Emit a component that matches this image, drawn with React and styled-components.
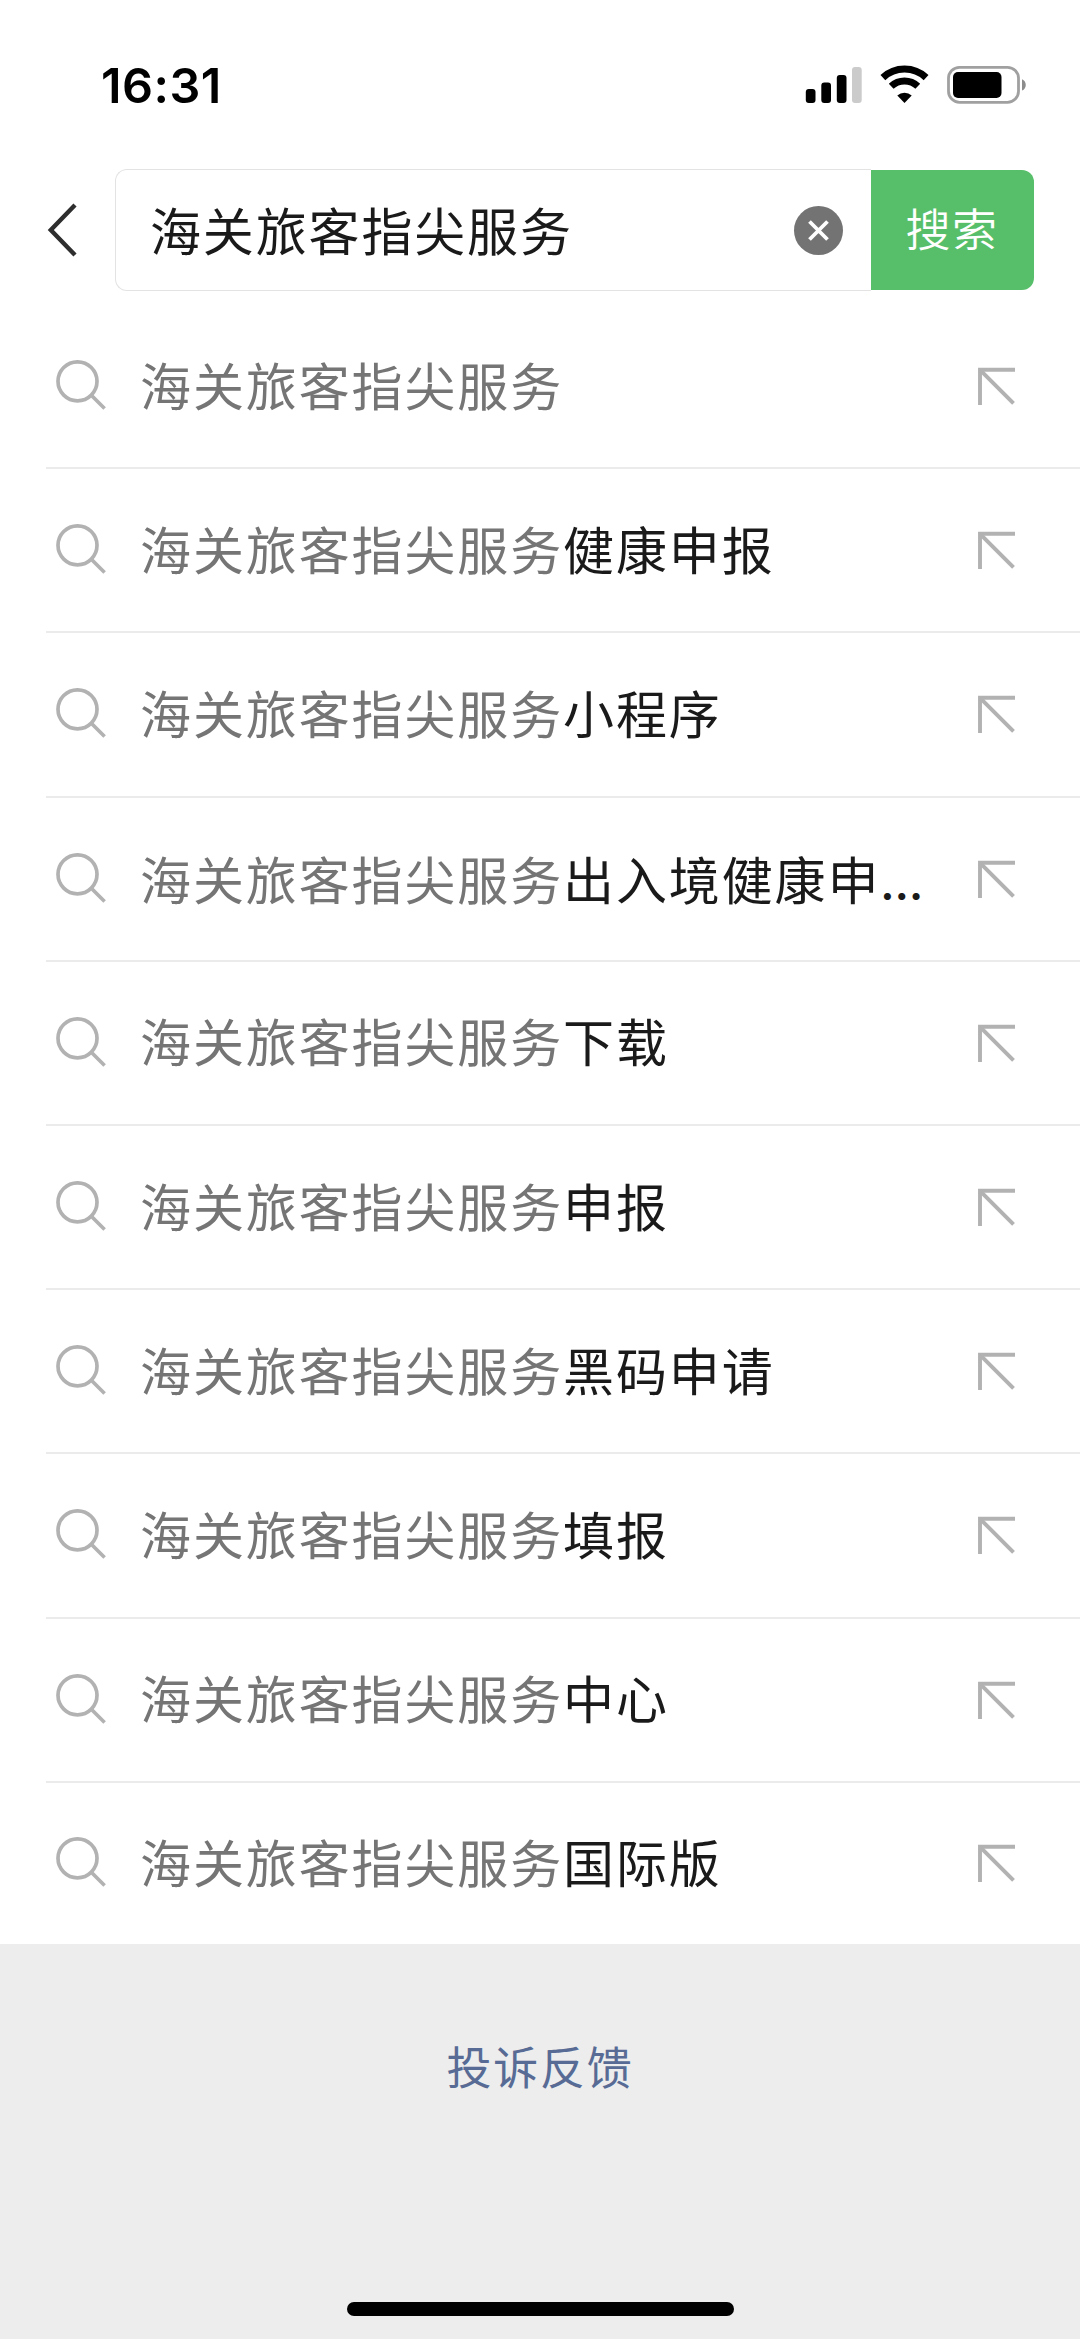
import React, { useState } from 'react';

import styled, { createGlobalStyle } from 'styled-components';

const GlobalStyle = createGlobalStyle`
    * {
        box-sizing: border-box;
    }

    body {
        margin: 0;
        background: #ededed;
        font-family: 'Noto Sans CJK SC', sans-serif;
    }
`;

const Page = styled.div`
    width: 1080px;
    height: 2339px;
    display: flex;
    flex-direction: column;
    overflow: hidden;
    background: #ededed;
`;

const StatusBar = styled.header`
    height: 169px;
    flex: none;
    padding: 0 53px 0 101px;
    display: flex;
    align-items: flex-start;
    justify-content: space-between;
    background: #fff;
`;

const Time = styled.span`
    padding-top: 56px;
    font-family: Inter, sans-serif;
    font-size: 48.5px;
    font-weight: 600;
    line-height: 60px;
    letter-spacing: 0.5px;
    color: #000;
`;

const StatusIcons = styled.div`
    padding-top: 65px;
    display: flex;
    align-items: flex-start;
    gap: 16px;

    svg {
        display: block;
    }
`;

const SearchHeader = styled.form`
    height: 136px;
    flex: none;
    padding: 0 46px 0 47px;
    display: flex;
    align-items: flex-start;
    background: #fff;
`;

const BackButton = styled.button`
    width: 68px;
    height: 122px;
    padding: 0;
    border: none;
    background: none;

    svg {
        display: block;
    }
`;

const SearchField = styled.div`
    width: 756px;
    height: 122px;
    padding: 0 28px 0 34px;
    display: flex;
    align-items: center;
    border: 1.5px solid #e3e3e3;
    border-right: none;
    border-radius: 12px 0 0 12px;
`;

const SearchInput = styled.input`
    flex: 1;
    min-width: 0;
    height: 100px;
    padding: 0 0 3px;
    border: none;
    outline: none;
    background: none;
    font-family: inherit;
    font-size: 51px;
    letter-spacing: 1.85px;
    color: #1a1a1a;
`;

const ClearButton = styled.button`
    width: 49px;
    height: 49px;
    padding: 0;
    border: none;
    border-radius: 50%;
    background: #737373;

    svg {
        display: block;
    }
`;

const SubmitButton = styled.button`
    width: 163px;
    height: 120px;
    margin-top: 1px;
    padding: 0 1px 5px 0;
    border: none;
    border-radius: 0 12px 12px 0;
    background: #57bf6a;
    font-family: inherit;
    font-size: 45px;
    font-weight: 350;
    letter-spacing: 1.5px;
    color: #fff;
`;

const List = styled.ul`
    margin: 0;
    padding: 0 0 0 46px;
    flex: none;
    list-style: none;
    background: #fff;
`;

const Item = styled.li`
    height: 164.2px;
    padding: 0 62px 0 8px;
    display: flex;
    align-items: center;
    border-bottom: 2px solid #ebebeb;

    &:last-child {
        height: 161.2px;
        border-bottom: none;
    }

    svg {
        flex: none;
        display: block;
    }
`;

const Label = styled.span`
    flex: 1;
    padding-left: 32px;
    padding-bottom: ${props => props.$cut ? '1px' : '5px'};
    font-size: 51px;
    line-height: 72px;
    letter-spacing: 1.88px;
    white-space: nowrap;
    color: #1a1a1a;
`;

const Matched = styled.span`
    color: #757575;
`;

const Ellipsis = styled.span`
    font-family: Inter, sans-serif;
    font-size: 45px;
    font-weight: 600;
    line-height: 1;
`;

const Footer = styled.footer`
    flex: 1;
    padding: 89px 0 23px;
    display: flex;
    flex-direction: column;
    align-items: center;
    justify-content: space-between;
`;

const Feedback = styled.a`
    font-size: 45px;
    line-height: 66px;
    letter-spacing: 1.7px;
    color: #576b95;
`;

const HomeIndicator = styled.div`
    width: 387px;
    height: 14px;
    border-radius: 7px;
    background: #000;
`;

const SignalIcon = () => (
    <svg width="58" height="40" viewBox="0 0 58 40">
        <rect x="0.8" y="24" width="9.7" height="14" rx="3" />
        <rect x="16.3" y="17.5" width="9.7" height="20.5" rx="3" />
        <rect x="31.8" y="10" width="9.7" height="28" rx="3" />
        <rect x="47" y="2" width="9.7" height="36" rx="3" fill="#cbcbcb" />
    </svg>
);

const WifiIcon = () => (
    <svg width="52" height="40" viewBox="0 0 52 40" fill="none" stroke="#000">
        <path d="M3.9 12.6a31.5 31.5 0 0 1 43.2 0" strokeWidth="7" />
        <path d="M12.2 21.2a19.4 19.4 0 0 1 26.6 0" strokeWidth="7" />
        <path d="M25.5 38l-7.2-7.4a10.4 10.4 0 0 1 14.4 0z" fill="#000" stroke="none" />
    </svg>
);

const BatteryIcon = () => (
    <svg width="80" height="40" viewBox="0 0 80 40">
        <rect x="1.5" y="2.3" width="70" height="35" rx="11" fill="none" stroke="#a0a0a0" strokeWidth="2.8" />
        <rect x="6" y="7" width="48.5" height="26" rx="5" />
        <path d="M75 14.2c5 2 5 9.4 0 11.4z" fill="#8c8c8c" />
    </svg>
);

const BackIcon = () => (
    <svg width="40" height="122" viewBox="0 0 40 122" fill="none" stroke="#2e2e2e" strokeWidth="4.4">
        <path d="M28 36L3.8 61L28 86" />
    </svg>
);

const ClearIcon = () => (
    <svg width="49" height="49" viewBox="0 0 49 49" fill="none" stroke="#fff" strokeWidth="3.8">
        <path d="M15.5 15.5l18 18M33.5 15.5l-18 18" />
    </svg>
);

const SearchIcon = () => (
    <svg width="54" height="54" viewBox="0 0 54 54" fill="none" stroke="#b2b2b2" strokeWidth="3.7">
        <circle cx="23.5" cy="22.3" r="19.5" />
        <path d="M37.3 36.3L50.6 49.5" />
    </svg>
);

const FillIcon = () => (
    <svg width="40" height="40" viewBox="0 0 40 40" fill="none" stroke="#b2b2b2" strokeWidth="3.9">
        <path d="M37 3.8H2V39" />
        <path d="M2.5 4.3L35.5 37.3" />
    </svg>
);

const keyword = '海关旅客指尖服务';

const suggestions = [
    { id: 1, rest: '' },
    { id: 2, rest: '健康申报' },
    { id: 3, rest: '小程序' },
    { id: 4, rest: '出入境健康申', cut: true },
    { id: 5, rest: '下载' },
    { id: 6, rest: '申报' },
    { id: 7, rest: '黑码申请' },
    { id: 8, rest: '填报' },
    { id: 9, rest: '中心' },
    { id: 10, rest: '国际版' },
];

const Suggestion = ({ item, onPick }) => {
    return (
        <Item onClick={() => onPick(keyword + item.rest)}>
            <SearchIcon />
            <Label $cut={item.cut}>
                <Matched>{keyword}</Matched>
                {item.rest}
                {item.cut && <Ellipsis>…</Ellipsis>}
            </Label>
            <FillIcon />
        </Item>
    )
}

const App = () => {

    const [query, setQuery] = useState(keyword);

    return (
        <Page>
            <GlobalStyle />
            <StatusBar>
                <Time>16:31</Time>
                <StatusIcons>
                    <SignalIcon />
                    <WifiIcon />
                    <BatteryIcon />
                </StatusIcons>
            </StatusBar>

            <SearchHeader onSubmit={e => e.preventDefault()}>
                <BackButton type="button">
                    <BackIcon />
                </BackButton>
                <SearchField>
                    <SearchInput value={query} onChange={e => setQuery(e.target.value)} />
                    <ClearButton type="button" onClick={() => setQuery('')}>
                        <ClearIcon />
                    </ClearButton>
                </SearchField>
                <SubmitButton>搜索</SubmitButton>
            </SearchHeader>

            <List>
                {suggestions.map(item => (
                    <Suggestion key={item.id} item={item} onPick={setQuery} />
                ))}
            </List>

            <Footer>
                <Feedback>投诉反馈</Feedback>
                <HomeIndicator />
            </Footer>
        </Page>
    )
}

export default App;
